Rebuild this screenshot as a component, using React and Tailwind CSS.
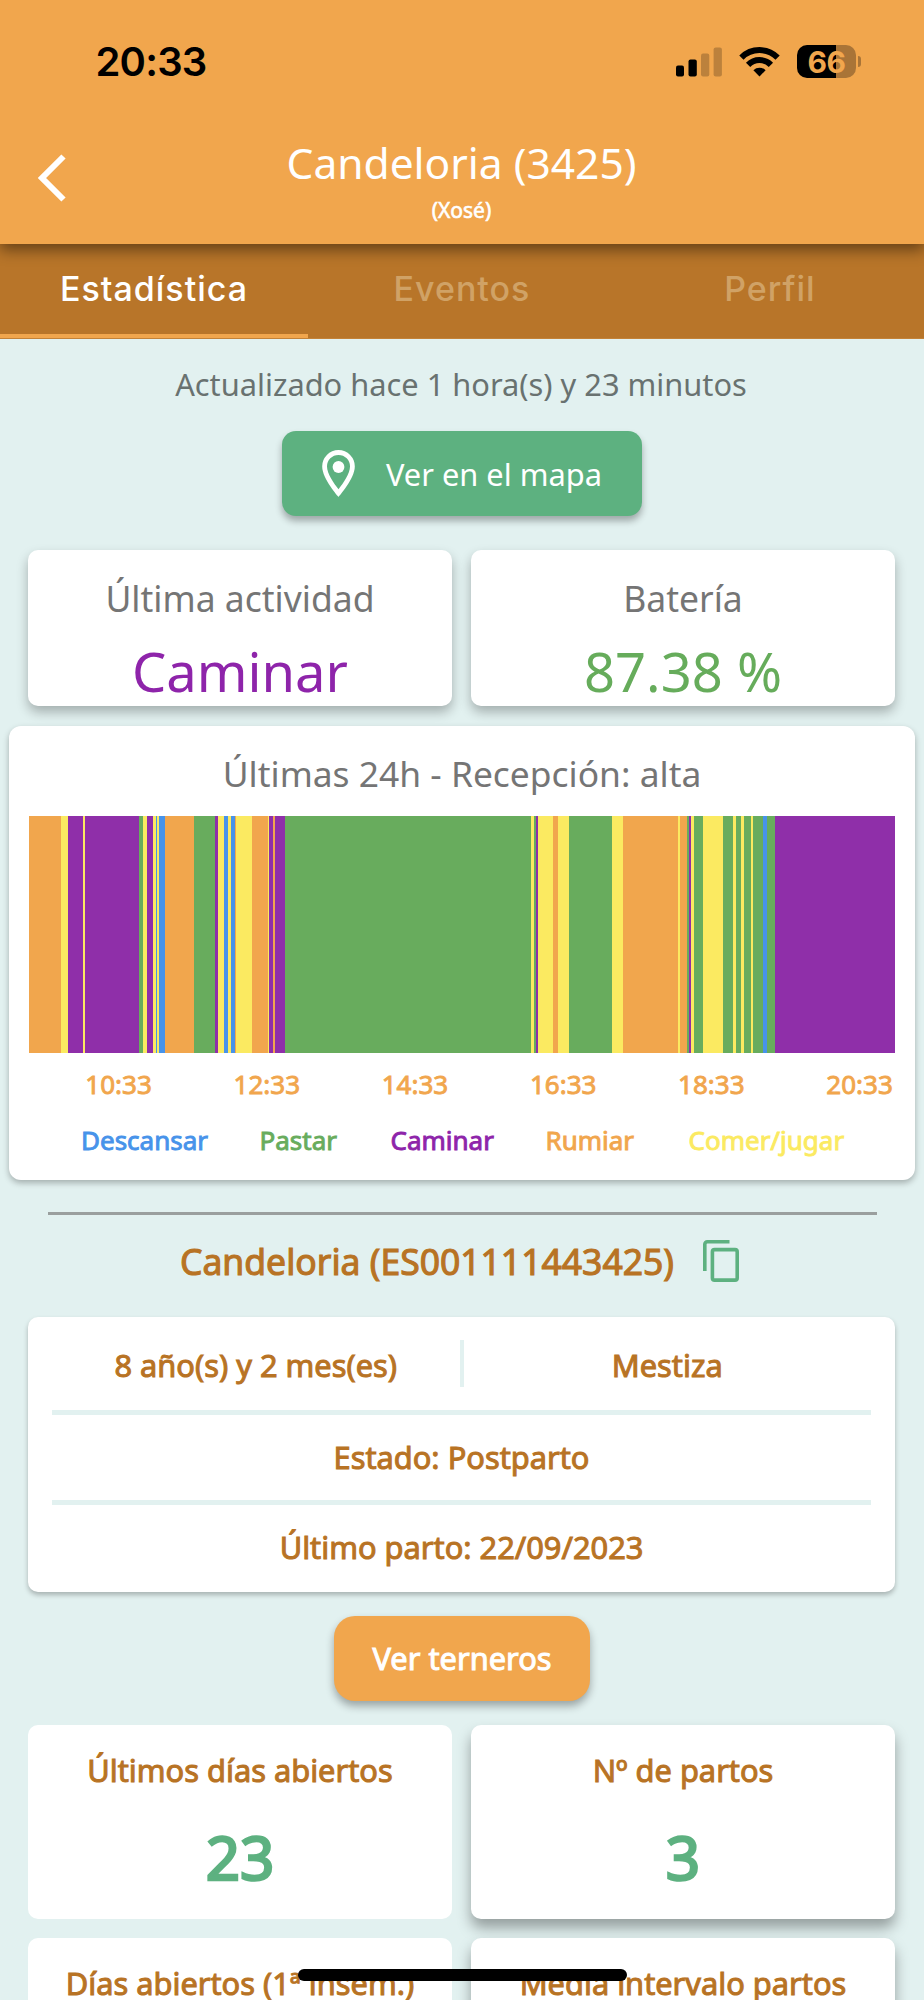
import React from "react";

const ORANGE = "#f1a64d";
const GREEN = "#68ac5d";
const PURPLE = "#8f2fa9";
const YELLOW = "#fbea61";
const BLUE = "#4793ea";

// activity blocks of the last 24h: [color, end]
const segments = [
  [ORANGE, 61], [YELLOW, 67.5], [PURPLE, 83.3], [YELLOW, 85], [PURPLE, 139],
  [GREEN, 143], [YELLOW, 147], [PURPLE, 153], [YELLOW, 156], [BLUE, 157],
  [YELLOW, 159], [BLUE, 165], [ORANGE, 194], [GREEN, 215], [PURPLE, 218],
  [YELLOW, 224], [BLUE, 228], [YELLOW, 231], [BLUE, 235], [ORANGE, 236.3],
  [YELLOW, 252], [ORANGE, 268], [YELLOW, 269.3], [PURPLE, 273], [ORANGE, 274.7],
  [PURPLE, 285], [GREEN, 531], [YELLOW, 534], [GREEN, 535.7], [PURPLE, 538],
  [YELLOW, 553.5], [ORANGE, 558.3], [YELLOW, 569], [GREEN, 612.5], [YELLOW, 623],
  [ORANGE, 678], [YELLOW, 680], [ORANGE, 687.5], [GREEN, 689], [PURPLE, 691.3],
  [YELLOW, 694], [GREEN, 703.3], [YELLOW, 723], [GREEN, 733.5], [YELLOW, 736],
  [GREEN, 741.3], [YELLOW, 743.7], [GREEN, 750.7], [YELLOW, 753], [GREEN, 763.5],
  [BLUE, 767.5], [GREEN, 775.5], [PURPLE, 895],
];

const hours = ["10:33", "12:33", "14:33", "16:33", "18:33", "20:33"];

const StatusBar = () => (
  <div className="flex h-[123px] items-center pl-[95.5px] pr-[63px] font-['Inter'] text-black">
    <span className="text-[40px] font-semibold leading-none tracking-[-0.8px]">20:33</span>
    <div className="ml-auto flex items-center">
      <svg width="46" height="30" viewBox="0 0 46 30">
        <rect x="0" y="18.5" width="8" height="11" rx="2" />
        <rect x="12.5" y="12.5" width="8.3" height="17" rx="2" />
        <rect x="25" y="6.5" width="8.3" height="23" rx="2" opacity=".22" />
        <rect x="37.6" y="0.5" width="8.3" height="29" rx="2" opacity=".22" />
      </svg>
      <svg className="ml-[17px]" width="41" height="30" viewBox="0 0 41 30" fill="none" stroke="#000" strokeWidth="6">
        <path d="M2.4 10.6a25.6 25.6 0 0 1 36.2 0" />
        <path d="M9.1 17.8a16.1 16.1 0 0 1 22.8 0" />
        <path d="M20.5 29.5 14.4 23.2a8.8 8.8 0 0 1 12.2 0Z" fill="#000" stroke="none" />
      </svg>
      <div className="ml-[17px] flex h-[33px] w-[59px] items-center justify-center rounded-[10px] bg-[linear-gradient(90deg,#000_66%,#a97437_66%)] text-[30px] font-bold leading-none tracking-[-0.5px] text-[#f1a64d]">
        66
      </div>
      <div className="ml-[2px] h-[11px] w-[3px] rounded-r-full bg-[#a97437]" />
    </div>
  </div>
);

const Header = () => (
  <div className="relative z-10 h-[244px] bg-[#f1a64d] shadow-[0_6px_14px_rgba(0,0,0,0.45)]">
    <StatusBar />
    <div className="flex">
      <div className="w-[120px] pl-[37px] pt-[31px]">
        <svg width="30" height="48" viewBox="0 0 30 48" fill="none" stroke="#fff" strokeWidth="6">
          <path d="M26.5 2.5 5 24l21.5 21.5" />
        </svg>
      </div>
      <div className="flex-1 text-center text-white">
        <h1 className="mt-[10px] text-[42.5px] leading-[60px]">Candeloria (3425)</h1>
        <p className="mt-[2px] text-[21px] leading-[30px] [-webkit-text-stroke:0.6px_white]">(Xosé)</p>
      </div>
      <div className="w-[121px]" />
    </div>
  </div>
);

const Tabs = () => (
  <div className="flex h-[95px] border-b border-[#c38238] bg-[#b87529] font-['Inter'] text-[34px] font-medium tracking-[1px] text-[#d0a266]">
    <div className="w-1/3 border-b-[4px] border-[#f1a64d] pt-[20px] text-center leading-[50px] text-white">Estadística</div>
    <div className="w-1/3 pt-[20px] text-center leading-[50px]">Eventos</div>
    <div className="w-1/3 pt-[20px] text-center leading-[50px]">Perfil</div>
  </div>
);

const Chart = () => (
  <div className="mx-[9px] mt-[20px] h-[454px] rounded-xl bg-white px-[19.5px] pt-[22px] shadow-[0_3px_6px_rgba(0,0,0,0.28)]">
    <h2 className="text-center text-[35.4px] leading-[50px] text-[#757575]">Últimas 24h - Recepción: alta</h2>
    <div className="mt-[18px] flex h-[237px]">
      {segments.map(([color, end], i) => {
        const start = i ? segments[i - 1][1] : 28.5;
        return <div key={i} style={{ width: end - start, background: color }} />;
      })}
    </div>
    <div className="ml-[16px] mt-[11px] flex text-[26px] leading-[40px] text-[#f1a64d] [-webkit-text-stroke:0.9px_#f1a64d]">
      {hours.map((hour) => (
        <span key={hour} className="w-[148.2px] shrink-0 text-center">{hour}</span>
      ))}
    </div>
    <div className="ml-[52.5px] mt-[16px] flex text-[26px] leading-[40px]">
      <span className="w-[178.5px] text-[#4793ea] [-webkit-text-stroke:0.9px_#4793ea]">Descansar</span>
      <span className="w-[131px] text-[#68ac5d] [-webkit-text-stroke:0.9px_#68ac5d]">Pastar</span>
      <span className="w-[155px] text-[#8e24aa] [-webkit-text-stroke:0.9px_#8e24aa]">Caminar</span>
      <span className="w-[143px] text-[#f1a64d] [-webkit-text-stroke:0.9px_#f1a64d]">Rumiar</span>
      <span className="text-[#fbea61] [-webkit-text-stroke:0.9px_#fbea61]">Comer/jugar</span>
    </div>
  </div>
);

const App = () => {
  return (
    <div className="relative h-[2000px] w-[924px] overflow-hidden bg-[#e2f1f0] font-['Noto_Sans','Open_Sans',sans-serif]">
      <Header />
      <Tabs />

      <p className="mt-[24px] pr-[2px] text-center text-[30.8px] leading-[42px] text-[#697270]">
        Actualizado hace 1 hora(s) y 23 minutos
      </p>

      <button className="mx-auto mt-[26px] flex h-[85px] w-[360px] items-center rounded-[14px] bg-[#5db180] pl-[40px] text-white shadow-[0_5px_7px_rgba(0,0,0,0.3)]">
        <svg width="33" height="48" viewBox="0 0 33 48" fill="#fff">
          <path fillRule="evenodd" d="M16.5 0A16.3 16.3 0 0 0 .2 16.6C.2 29 16.5 47 16.5 47S32.8 29 32.8 16.6A16.3 16.3 0 0 0 16.5 0Zm0 4.9a11.5 11.5 0 0 1 11.5 11.7c0 7.2-6.8 16.8-11.5 22.7C11.8 33.4 5 23.8 5 16.6A11.5 11.5 0 0 1 16.5 4.9Z" />
          <circle cx="16.5" cy="17" r="5.9" />
        </svg>
        <span className="ml-[31px] text-[30.8px] leading-[42px]">Ver en el mapa</span>
      </button>

      <div className="ml-[28px] mr-[29px] mt-[34px] flex gap-[19px]">
        <div className="h-[156px] flex-1 rounded-[10px] bg-white pt-[23px] text-center shadow-[0_6px_12px_rgba(0,0,0,0.28)]">
          <h2 className="text-[35.5px] leading-[50px] text-[#757575]">Última actividad</h2>
          <p className="mt-[18px] text-[54.3px] leading-[60px] text-[#8e24aa]">Caminar</p>
        </div>
        <div className="h-[156px] flex-1 rounded-[10px] bg-white pt-[23px] text-center shadow-[0_6px_12px_rgba(0,0,0,0.28)]">
          <h2 className="text-[35.5px] leading-[50px] text-[#757575]">Batería</h2>
          <p className="mt-[18px] text-[54.3px] leading-[60px] text-[#66ac5b]">87.38 %</p>
        </div>
      </div>

      <Chart />

      <div className="mx-[47.5px] mt-[32px] h-[2.5px] bg-[#9a9f9e]" />

      <div className="mt-[21.5px] flex h-[50px] items-center pl-[180px] text-[#b87324]">
        <h2 className="w-[523px] text-[35.5px] leading-[50px] [-webkit-text-stroke:1.1px_#b87324]">
          Candeloria (ES001111443425)
        </h2>
        <svg width="36" height="42" viewBox="0 0 36 42" fill="none" stroke="#5db180" strokeWidth="3.6">
          <path d="M1.8 31V4.3a2.5 2.5 0 0 1 2.5-2.5H26.5" />
          <rect x="9.4" y="9.6" width="24.8" height="30.5" rx="2.2" />
        </svg>
      </div>

      <div className="ml-[28px] mr-[29px] mt-[31px] h-[275px] rounded-[10px] bg-white px-[24px] text-center text-[30.8px] leading-[42px] text-[#b87324] shadow-[0_3px_5px_rgba(0,0,0,0.26)] [-webkit-text-stroke:1px_#b87324]">
        <div className="flex h-[93px] items-center">
          <span className="flex-1 pt-[2px]">8 año(s) y 2 mes(es)</span>
          <div className="h-[47px] w-[4px] bg-[#e2f1f0]" />
          <span className="flex-1 pt-[2px]">Mestiza</span>
        </div>
        <div className="h-[5px] bg-[#e2f1f0]" />
        <p className="h-[85px] pt-[21px]">Estado: Postparto</p>
        <div className="h-[5px] bg-[#e2f1f0]" />
        <p className="pt-[21px]">Último parto: 22/09/2023</p>
      </div>

      <button className="mx-auto mt-[24px] flex h-[85px] w-[256px] items-center justify-center rounded-[21px] bg-[#f1a64d] text-[30.8px] text-white shadow-[0_5px_8px_rgba(0,0,0,0.32)] [-webkit-text-stroke:1px_white]">
        Ver terneros
      </button>

      <div className="ml-[28px] mr-[29px] mt-[24px] grid grid-cols-2 gap-[19px] text-center text-[30.8px] leading-[42px] text-[#b87324] [-webkit-text-stroke:1px_#b87324]">
        <div className="h-[194px] rounded-[10px] bg-white pt-[24px]">
          <h3>Últimos días abiertos</h3>
          <p className="mt-[31px] text-[60px] leading-[70px] text-[#5db180] [-webkit-text-stroke:2.5px_#5db180]">23</p>
        </div>
        <div className="h-[194px] rounded-[10px] bg-white pt-[24px] shadow-[0_9px_14px_rgba(0,0,0,0.34)]">
          <h3>Nº de partos</h3>
          <p className="mt-[31px] text-[60px] leading-[70px] text-[#5db180] [-webkit-text-stroke:2.5px_#5db180]">3</p>
        </div>
        <div className="h-[194px] rounded-[10px] bg-white pt-[24px]">
          <h3>Días abiertos (1ª insem.)</h3>
        </div>
        <div className="h-[194px] rounded-[10px] bg-white pt-[24px] shadow-[0_9px_14px_rgba(0,0,0,0.34)]">
          <h3>Media intervalo partos</h3>
        </div>
      </div>

      {/* home indicator */}
      <div className="absolute left-[298px] top-[1969px] h-[12px] w-[329px] rounded-full bg-black" />
    </div>
  );
};

export default App;
